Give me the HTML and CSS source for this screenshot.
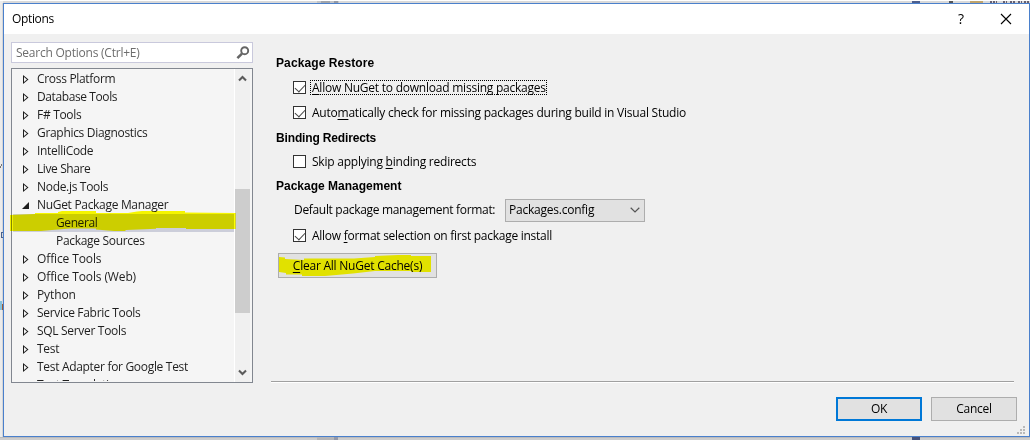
FILE: index.html
```
<!DOCTYPE html>
<html lang="en">
<head>
<meta charset="utf-8">
<title>Options</title>
<link rel="stylesheet" href="styles.css">
</head>
<body>
<svg class="backdrop" width="1033" height="440" shape-rendering="crispEdges">
  <rect width="1030" height="440" fill="#d9d9d9"/>
  <rect width="1033" height="1" fill="#fff"/>
  <rect x="0" y="1" width="3" height="436" fill="#ececec"/>
  <rect x="2" y="3" width="1" height="434" fill="#d6d6d6"/>
  <rect x="1030" width="3" height="440" fill="#fff"/>
  <rect x="0" y="437" width="1030" height="1" fill="#bbbbbd"/>
  <rect x="0" y="438" width="1030" height="2" fill="#cdcdcd"/>
  <rect x="317" y="1" width="22" height="2" fill="#c2c3c5"/>
  <rect x="321" y="1" width="9" height="2" fill="#a2a5aa"/>
  <rect x="334" y="1" width="4" height="2" fill="#9499a5"/>
  <rect x="317" y="437" width="17" height="3" fill="#b5b5b7"/>
  <rect x="334" y="437" width="4" height="3" fill="#9298a9"/>
  <rect x="912" y="1" width="8" height="2" fill="#4d5f8d"/>
  <rect x="912" y="437" width="8" height="3" fill="#46527a"/>
  <rect x="949" y="1" width="4" height="2" fill="#555"/>
  <rect x="970" y="1" width="13" height="2" fill="#c0a46c"/>
  <path d="M990 2h7M1003 2h4M1010 2h5M1018 2h4M1024 2h5" stroke="#665f70" stroke-width="2" stroke-dasharray="2 1"/>
  <path d="M2 164L0 168" stroke="#777"/>
  <path d="M3 232H1V237H3" stroke="#49618a" fill="none"/>
  <rect x="0" y="301" width="2" height="9" fill="#87c2dc"/>
  <path d="M2 304V310" stroke="#a05b32"/>
</svg>
<main class="dialog">
  <header class="titlebar">
    <h1 class="title">Options</h1>
    <span class="help">?</span>
    <svg class="close" width="12" height="12" viewBox="0 0 12 12"><path d="M1 1L11 11M11 1L1 11" stroke="#000" stroke-width="1.1"/></svg>
  </header>
  <div class="content">
    <aside class="sidebar">
      <div class="search">
        <span class="search-text">Search Options (Ctrl+E)</span>
        <svg width="14" height="14" viewBox="0 0 14 14" fill="none" stroke="#656565"><circle cx="8.7" cy="4.7" r="3.5" stroke-width="1.9"/><path d="M6 7.6L1.4 12.2" stroke-width="2.6"/></svg>
      </div>
      <div class="tree">
        <ul class="rows">
          <li class="row"><i class="arrow"></i><span>Cross Platform</span></li>
          <li class="row"><i class="arrow"></i><span class="tight">Database Tools</span></li>
          <li class="row"><i class="arrow"></i><span>F# Tools</span></li>
          <li class="row"><i class="arrow"></i><span>Graphics Diagnostics</span></li>
          <li class="row"><i class="arrow"></i><span>IntelliCode</span></li>
          <li class="row"><i class="arrow"></i><span class="tight">Live Share</span></li>
          <li class="row"><i class="arrow"></i><span>Node.js Tools</span></li>
          <li class="row"><i class="arrow open"></i><span>NuGet Package Manager</span></li>
          <li class="row child selected"><span class="tight">General</span></li>
          <li class="row child"><span>Package Sources</span></li>
          <li class="row"><i class="arrow"></i><span class="wide">Office Tools</span></li>
          <li class="row"><i class="arrow"></i><span class="wide">Office Tools (Web)</span></li>
          <li class="row"><i class="arrow"></i><span class="wide">Python</span></li>
          <li class="row"><i class="arrow"></i><span>Service Fabric Tools</span></li>
          <li class="row"><i class="arrow"></i><span>SQL Server Tools</span></li>
          <li class="row"><i class="arrow"></i><span>Test</span></li>
          <li class="row"><i class="arrow"></i><span>Test Adapter for Google Test</span></li>
          <li class="row"><i class="arrow none"></i><span>Text Templating</span></li>
        </ul>
        <div class="scrollbar">
          <svg width="9" height="7" viewBox="0 0 9 7"><path d="M1 5.6L4.5 2.1L8 5.6" fill="none" stroke="#5a5a5a" stroke-width="2.1"/></svg>
          <div class="thumb"></div>
          <svg class="down" width="9" height="7" viewBox="0 0 9 7"><path d="M1 1.4L4.5 4.9L8 1.4" fill="none" stroke="#5a5a5a" stroke-width="2.1"/></svg>
        </div>
      </div>
    </aside>
    <section class="panel">
      <h2 class="heading h-restore">Package Restore</h2>
      <label class="check c-download"><i class="box on"></i><span class="label focused"><u>A</u>llow NuGet to download missing packages</span></label>
      <label class="check c-auto"><i class="box on"></i><span class="label">Auto<u>m</u>atically check for missing packages during build in Visual Studio</span></label>
      <h2 class="heading h-binding">Binding Redirects</h2>
      <label class="check c-skip"><i class="box"></i><span class="label">Skip applying <u>b</u>inding redirects</span></label>
      <h2 class="heading h-manage">Package Management</h2>
      <div class="format">
        <span class="format-label">Default package management format:</span>
        <div class="select"><span>Packages.config</span><svg width="10" height="6" viewBox="0 0 10 6"><path d="M.7 .8L5 5L9.3 .8" fill="none" stroke="#555" stroke-width="1.2"/></svg></div>
      </div>
      <label class="check c-format"><i class="box on"></i><span class="label">Allow <u>f</u>ormat selection on first package install</span></label>
      <button class="clear"><span><u>C</u>lear All NuGet Cache(s)</span></button>
      <hr class="rule">
      <div class="actions">
        <button class="btn ok">OK</button>
        <button class="btn">Cancel</button>
      </div>
    </section>
  </div>
  <svg class="grip" width="9" height="9" fill="#b9b9b9"><path d="M6 0h2v2h-2zM3 3h2v2h-2zM6 3h2v2h-2zM0 6h2v2h-2zM3 6h2v2h-2zM6 6h2v2h-2z"/></svg>
</main>
<svg class="marker" width="1033" height="440" fill="#ff0">
  <path d="M10 215L35 214V213H58V212L62 211H96V213H128L137 211.5L142 211H185V212.5L235.7 213V229H186V228H156V228.7L126 230L125 231H114L96 229.5V228.5H70L52 230L41 231H10Z"/>
  <path d="M279 257L285 257.5V259L304 260V258.5L354 258.5L375 257V256L398 255H411V256H431V272H411V271H375L353 273.5L325 276H302V274.5H286V273L279 272Z"/>
</svg>
</body>
</html>
```
FILE: styles.css
```
* { box-sizing: border-box; }
body {
  margin: 0;
  width: 1033px;
  height: 440px;
  overflow: hidden;
  position: relative;
  background: #fff;
  font: 12px/18px "Open Sans", "Noto Sans", sans-serif;
  color: #000;
  letter-spacing: -0.23px;
}
.backdrop { position: absolute; left: 0; top: 0; z-index: -1; }
.marker { position: absolute; left: 0; top: 0; mix-blend-mode: multiply; pointer-events: none; }
.dialog {
  position: relative;
  width: 1027px;
  height: 434px;
  margin: 3px 0 0 3px;
  border: 1px solid #4a80cc;
  background: #f0f0f0;
}
.titlebar {
  height: 30px;
  padding: 0 13px 0 8px;
  display: flex;
  align-items: center;
  background: #fff;
}
.title { margin: 0; flex: 1; font-size: 12px; font-weight: 400; letter-spacing: -0.35px; }
.help { width: 7px; margin-right: 35px; font-size: 14px; }
.close { display: block; margin-right: 4px; }
.content { display: flex; height: 402px; }
.sidebar { width: 249px; padding: 8px 0 0 7px; }
.search {
  width: 242px;
  height: 21px;
  display: flex;
  align-items: center;
  justify-content: space-between;
  padding: 0 2px 0 4px;
  border: 1px solid #c9c9dc;
  background: #fff;
  color: #6d6d6d;
}
.tree {
  width: 242px;
  height: 315px;
  margin-top: 5px;
  display: flex;
  border: 1px solid #828790;
  background: #f5f5f5;
  overflow: hidden;
}
.rows { list-style: none; margin: 0; padding: 1px 0 0 1px; width: 222px; flex: none; height: 312px; overflow: hidden; color: #1e1e1e; letter-spacing: -0.31px; }
.row { height: 18px; display: flex; align-items: center; padding: 0 0 0 10px; white-space: nowrap; }
.row.child { padding-left: 43px; }
.row.selected { background: #ccceda; }
.tight { letter-spacing: -0.4px; }
.wide { letter-spacing: -0.12px; }
.arrow { width: 6px; height: 9px; margin: 1px 8px 0 0; background: #1e1e1e; clip-path: polygon(0 0, 5.5px 4.5px, 0 9px); position: relative; }
.arrow::after { content: ""; position: absolute; inset: 0; background: #f5f5f5; clip-path: polygon(1px 2.1px, 4px 4.5px, 1px 6.9px); }
.arrow.open { width: 7px; height: 7px; margin: 1px 8px 0 -1px; clip-path: polygon(100% 0, 100% 100%, 0 100%); }
.arrow.open::after, .arrow.none { visibility: hidden; }
.scrollbar {
  width: 17px;
  border-left: 1px solid #fff;
  border-right: 1px solid #f5f5f5;
  background: #f0f0f0;
  display: flex;
  flex-direction: column;
  padding: 6px 0 6px;
}
.scrollbar svg { margin-left: 3px; flex: none; }
.scrollbar .down { margin-top: auto; }
.thumb { height: 124px; margin-top: 107px; background: #cdcdcd; }
.panel { flex: 1; display: flex; flex-direction: column; align-items: flex-start; padding: 20px 0 0 23px; }
.heading { margin: 0; font: 700 12px/18px "Liberation Sans", Arial, sans-serif; }
.h-restore { letter-spacing: 0.1px; }
.check { display: flex; align-items: center; height: 17px; margin-left: 17px; }
.box { width: 13px; height: 13px; border: 1px solid #333; background: #fff; display: flex; }
.box.on::before { content: ""; width: 9px; height: 5px; margin: 2px 0 0 1px; border: solid #444; border-width: 0 0 1.3px 1.3px; transform: rotate(-47deg) scaleX(.95); }
.label { margin-left: 4px; padding: 0 1px 0 2px; line-height: 15px; }
.focused { outline: 1px dotted #000; outline-offset: -1px; }
u { text-decoration-thickness: 1px; text-underline-offset: 2px; }
.c-download { margin-top: 7px; }
.c-auto { margin-top: 8px; }
.h-binding { margin-top: 8px; letter-spacing: -0.15px; }
.c-skip { margin-top: 6px; }
.h-manage { margin-top: 7px; letter-spacing: 0; }
.format { display: flex; align-items: center; height: 24px; margin: 3px 0 0 18px; }
.format-label { width: 211px; white-space: nowrap; letter-spacing: -0.32px; }
.select { width: 140px; height: 23px; display: flex; align-items: center; justify-content: space-between; padding: 0 4px 0 3px; border: 1px solid #adadad; background: #e1e1e1; }
.c-format { margin-top: 5px; letter-spacing: -0.27px; }
button { font: inherit; letter-spacing: inherit; color: #000; border: 1px solid #adadad; border-radius: 0; background: #e1e1e1; padding: 0; }
.clear { width: 159px; height: 25px; margin: 9px 0 0 2px; }
.rule { width: 743px; height: 2px; margin: 103px 0 0 -5px; border: 0; border-top: 1px solid #a0a0a0; background: #fff; }
.actions { display: flex; gap: 9px; margin: 14px 0 0 560px; }
.btn { width: 86px; height: 24px; }
.ok { border: 2px solid #0078d7; }
.grip { position: absolute; right: 3px; bottom: 1px; }
```
